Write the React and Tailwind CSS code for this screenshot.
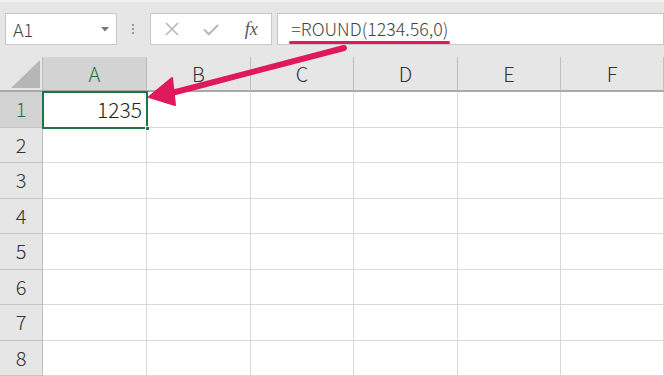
import React from "react";

const cols = ["A", "B", "C", "D", "E", "F"];
const rows = [1, 2, 3, 4, 5, 6, 7, 8];
const font = { fontFamily: '"Noto Sans CJK JP", "Noto Sans", sans-serif' };

export default function App() {
  return (
    <div
      className="relative w-[664px] h-[376px] overflow-hidden bg-white text-[#333] font-light"
      style={font}
    >
      {/* Toolbar */}
      <div className="h-[57px] bg-[#e6e6e6] border-t-2 border-[#f0f0f0] flex items-start pt-[11px] pl-[5px]">
        <div className="w-[115px] h-[32px] bg-white border border-[#c8c8c8] flex items-center justify-between pl-[7px] pr-[7px]">
          <span className="text-[18px] leading-none text-[#444]">A1</span>
          <svg width="8" height="5" viewBox="0 0 8 5">
            <path d="M0 0 L8 0 L4 4.5 Z" fill="#777" />
          </svg>
        </div>
        <div className="w-[35px] h-[32px] flex flex-col items-center justify-center gap-[2px]">
          <span className="w-[2px] h-[2px] bg-[#999]" />
          <span className="w-[2px] h-[2px] bg-[#999]" />
          <span className="w-[2px] h-[2px] bg-[#999]" />
        </div>
        <div className="w-[123px] h-[32px] bg-white border border-[#c8c8c8] flex items-center">
          <div className="w-[40px] flex justify-center pl-[2px]">
            <svg width="14" height="14" viewBox="0 0 14 14">
              <path d="M1 1 L13 13 M13 1 L1 13" stroke="#b8b8b8" strokeWidth="1.6" />
            </svg>
          </div>
          <div className="w-[40px] flex justify-center">
            <svg width="16" height="13" viewBox="0 0 16 13">
              <path d="M1 6.5 L5.8 11.3 L15 2" stroke="#b8b8b8" strokeWidth="2" fill="none" />
            </svg>
          </div>
          <div className="w-[40px] flex justify-center">
            <span
              className="italic font-normal text-[18px] leading-none text-[#555]"
              style={{ fontFamily: '"Liberation Serif", "DejaVu Serif", serif' }}
            >
              fx
            </span>
          </div>
        </div>
        <div className="ml-[5px] w-[400px] h-[32px] bg-white border border-[#c8c8c8] flex items-center pl-[13px]">
          <span className="relative text-[17.8px] leading-none text-[#444]">
            =ROUND(1234.56,0)
            <span className="absolute left-[-2px] right-[-2px] top-[21px] h-[3px] rounded-full bg-[#e0195d]" />
          </span>
        </div>
      </div>

      {/* Grid */}
      <div className="grid grid-cols-[43px_104px_104px_103px_104px_103px_103px]">
        {/* Header row */}
        <div className="relative h-[35px] bg-[#e6e6e6] border-r border-[#bdbdbd] border-b-2 border-b-[#a8a8a8]">
          <svg className="absolute left-[11px] top-[3px]" width="29" height="28" viewBox="0 0 29 28">
            <path d="M0 28 L29 28 L29 0 Z" fill="#b6b6b6" />
          </svg>
        </div>
        {cols.map((c) => (
          <div
            key={c}
            className={
              c === "A"
                ? "h-[35px] bg-[#d3d3d3] border-r border-[#bdbdbd] border-b-2 border-b-[#a8a8a8] flex items-center justify-center text-[20px] text-[#217346]"
                : "h-[35px] bg-[#e6e6e6] border-r border-[#bdbdbd] border-b-2 border-b-[#a8a8a8] flex items-center justify-center text-[20px] text-[#333]"
            }
          >
            {c}
          </div>
        ))}

        {rows.map((r) => (
          <React.Fragment key={r}>
            <div
              className={
                r === 1
                  ? "h-[35.5px] bg-[#d3d3d3] border-r border-[#bdbdbd] border-b border-b-[#c4c4c4] flex items-center justify-center text-[20px] text-[#217346]"
                  : "h-[35.5px] bg-[#e6e6e6] border-r border-[#bdbdbd] border-b border-b-[#c4c4c4] flex items-center justify-center text-[20px] text-[#333]"
              }
            >
              {r}
            </div>
            {cols.map((c) => (
              <div
                key={c}
                className="h-[35.5px] border-r border-b border-[#d9d9d9] flex items-center justify-end pr-[4px] text-[21px] text-[#222]"
              >
                {r === 1 && c === "A" ? "1235" : ""}
              </div>
            ))}
          </React.Fragment>
        ))}
      </div>

      {/* Selection outline on A1 */}
      <div className="absolute left-[42px] top-[91px] w-[106px] h-[38px] border-2 border-[#217346] pointer-events-none" />
      <div className="absolute left-[145px] top-[126px] w-[5px] h-[5px] bg-[#217346] border border-white pointer-events-none" />

      {/* Arrow */}
      <svg className="absolute left-0 top-0 pointer-events-none" width="664" height="376" viewBox="0 0 664 376">
        <path d="M344 48 L168 94" stroke="#e0195d" strokeWidth="6" strokeLinecap="round" />
        <path d="M149 97 L172 78 L175 105 Z" fill="#e0195d" stroke="#e0195d" strokeWidth="2" strokeLinejoin="round" />
      </svg>
    </div>
  );
}
